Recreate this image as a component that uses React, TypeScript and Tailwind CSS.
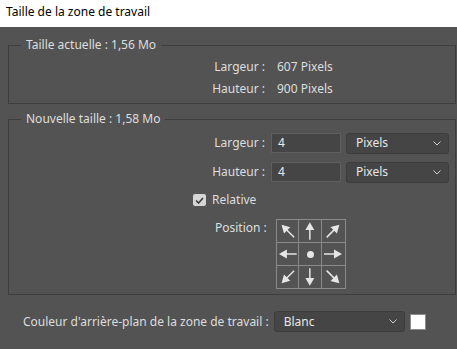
import React from 'react';

// Petite flèche pour la grille de position (pointe pleine + tige)
const Arrow: React.FC<{ angle: number }> = ({ angle }) => (
  <svg width="22" height="22" viewBox="0 0 22 22">
    <g transform={`rotate(${angle} 11 11)`}>
      <line x1="11" y1="20" x2="11" y2="8" stroke="#e6e6e6" strokeWidth="1.5" />
      <polygon points="11,2 6.5,10 15.5,10" fill="#e6e6e6" />
    </g>
  </svg>
);

const Chevron: React.FC = () => (
  <svg width="8" height="5" viewBox="0 0 8 5" className="shrink-0">
    <polyline points="0.5,0.5 4,4 7.5,0.5" fill="none" stroke="#cfcfcf" strokeWidth="1" />
  </svg>
);

const Select: React.FC<{ value: string; className: string }> = ({ value, className }) => (
  <div
    className={`flex items-center justify-between rounded-[3px] border border-[#3c3c3c] bg-[#454545] pl-[9px] pr-[7px] text-[#e8e8e8] ${className}`}
  >
    <span>{value}</span>
    <Chevron />
  </div>
);

export default function App() {
  const arrows: (number | null)[] = [-45, 0, 45, -90, null, 90, -135, 180, 135];

  return (
    <div
      className="w-[457px] h-[349px] overflow-hidden bg-[#535353] text-[12px] leading-[16px] text-[#dedede]"
      style={{ fontFamily: '"Noto Sans", "Open Sans", sans-serif' }}
    >
      {/* Barre de titre */}
      <div className="h-[27px] bg-white text-black flex items-center pl-[6px] pb-[3px]">
        Taille de la zone de travail
      </div>

      {/* Taille actuelle */}
      <fieldset className="ml-[8px] mr-[1px] mt-[10px] h-[67px] border border-[#3e3e3e]">
        <legend className="ml-[12px] px-[5px]">Taille actuelle : 1,56 Mo</legend>
        <div className="flex flex-col gap-[6px] pt-[6px]">
          <div className="flex">
            <span className="w-[256px] text-right">Largeur :</span>
            <span className="ml-[12px]">607 Pixels</span>
          </div>
          <div className="flex">
            <span className="w-[256px] text-right">Hauteur :</span>
            <span className="ml-[12px]">900 Pixels</span>
          </div>
        </div>
      </fieldset>

      {/* Nouvelle taille */}
      <fieldset className="ml-[8px] mr-[1px] mt-[7px] h-[184px] border border-[#3e3e3e]">
        <legend className="ml-[12px] px-[5px]">Nouvelle taille : 1,58 Mo</legend>
        <div className="flex flex-col pt-[6px]">
          <div className="flex items-center h-[20px]">
            <span className="w-[256px] text-right">Largeur :</span>
            <div className="ml-[6px] w-[70px] h-[20px] border border-[#5f5f5f] bg-[#454545] pl-[6px] flex items-center text-[#eaeaea]">4</div>
            <Select value="Pixels" className="ml-[5px] w-[103px] h-[21px]" />
          </div>
          <div className="flex items-center h-[20px] mt-[9px]">
            <span className="w-[256px] text-right">Hauteur :</span>
            <div className="ml-[6px] w-[70px] h-[20px] border border-[#5f5f5f] bg-[#454545] pl-[6px] flex items-center text-[#eaeaea]">4</div>
            <Select value="Pixels" className="ml-[5px] w-[103px] h-[21px]" />
          </div>
          <div className="flex items-center mt-[10px] pl-[184px]">
            <div className="w-[13px] h-[12px] rounded-[2px] bg-[#d6d6d6] flex items-center justify-center">
              <svg width="9" height="7" viewBox="0 0 9 7">
                <polyline points="1,3.5 3.5,6 8,1" fill="none" stroke="#3a3a3a" strokeWidth="1.6" />
              </svg>
            </div>
            <span className="ml-[6px]">Relative</span>
          </div>
          <div className="flex items-start mt-[11px] pl-[206px]">
            <span className="mt-[1px]">Position :</span>
            <div className="ml-[9px] grid grid-cols-3 w-[70px] h-[70px] border border-[#8a8a8a]">
              {arrows.map((a, i) => (
                <div
                  key={i}
                  className={`flex items-center justify-center border-[#8a8a8a] ${i % 3 !== 2 ? 'border-r' : ''} ${i < 6 ? 'border-b' : ''}`}
                >
                  {a === null ? <div className="w-[7px] h-[7px] rounded-full bg-[#e6e6e6]" /> : <Arrow angle={a} />}
                </div>
              ))}
            </div>
          </div>
        </div>
      </fieldset>

      {/* Couleur d'arrière-plan */}
      <div className="flex items-center mt-[16px] pl-[23px]">
        <span>Couleur d'arrière-plan de la zone de travail :</span>
        <Select value="Blanc" className="ml-[5px] w-[131px] h-[21px]" />
        <div className="ml-[5px] w-[16px] h-[16px] bg-white border border-[#8c8c8c]" />
      </div>
    </div>
  );
}
